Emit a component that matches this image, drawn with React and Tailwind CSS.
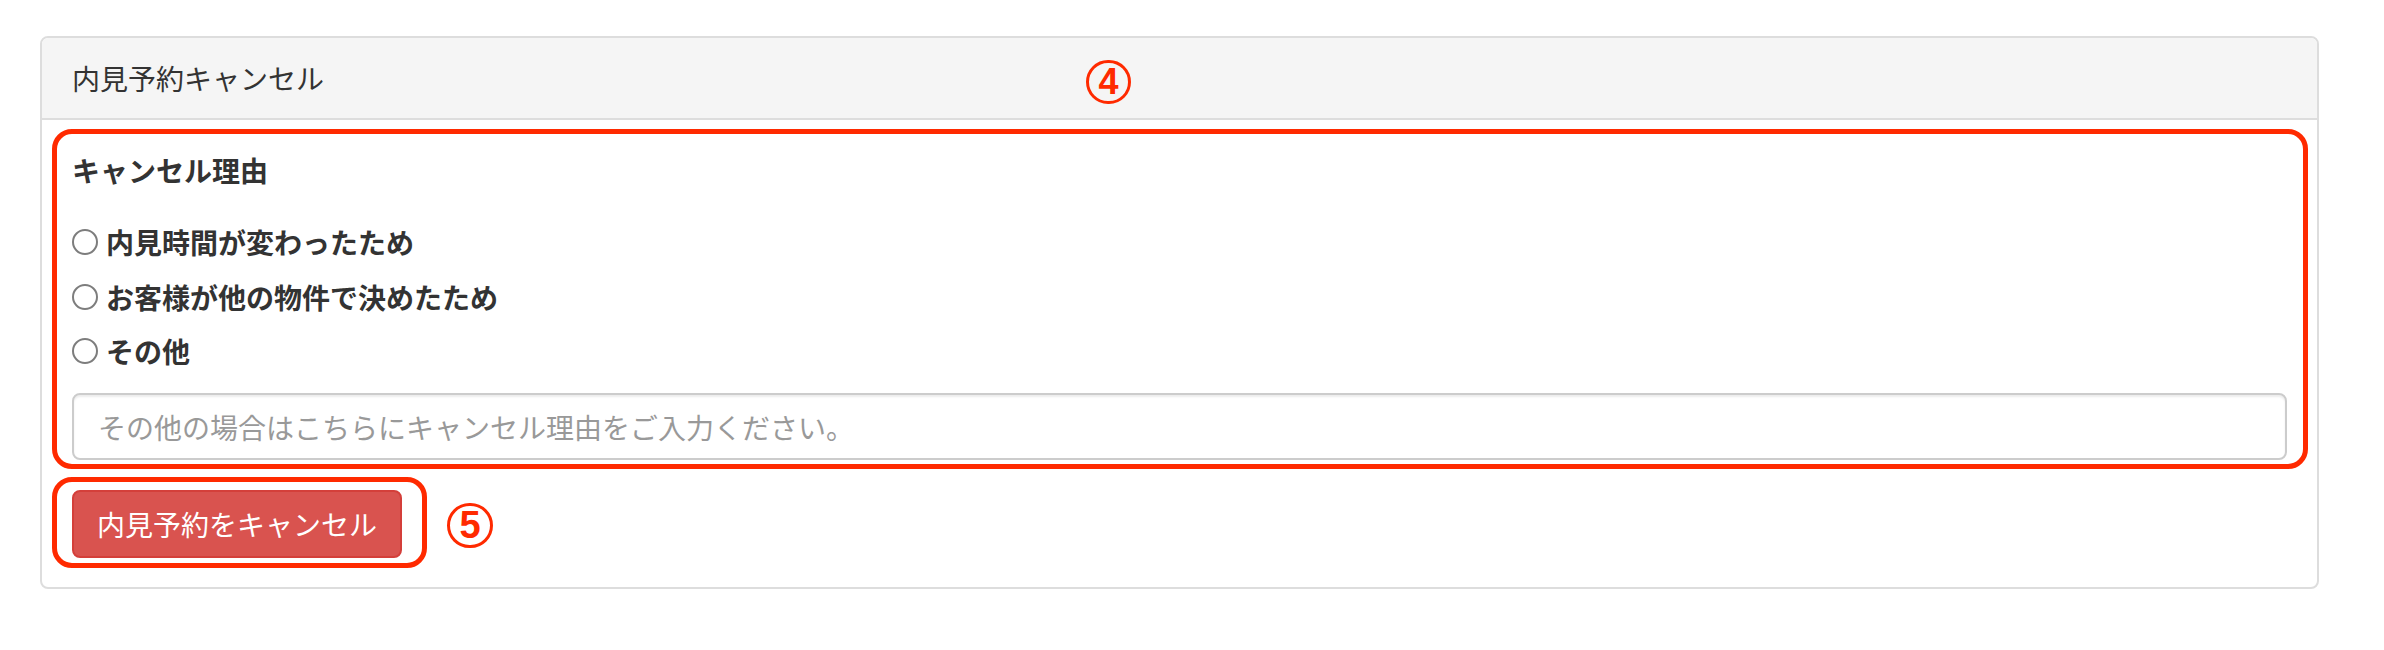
import React from "react";

const font = { fontFamily: '"Noto Sans CJK JP", "Noto Sans", sans-serif' };
const digitFont = { fontFamily: '"Liberation Sans", Arial, sans-serif' };

function Radio({ label }) {
  return (
    <label className="flex items-center h-[54.5px] gap-[8px] text-[28px] font-bold text-[#333] leading-[40px]">
      <span className="w-[26px] h-[26px] rounded-full border-2 border-[#7d7d7d] bg-white shrink-0" />
      <span>{label}</span>
    </label>
  );
}

export default function App() {
  return (
    <div className="relative w-full h-[650px] bg-white pt-[36px] pl-[40px]" style={font}>
      <div className="w-[2279px] border-2 border-[#ddd] rounded-[8px] bg-white">
        <div className="h-[82px] bg-[#f5f5f5] border-b-2 border-[#ddd] rounded-t-[6px] flex items-center pl-[30px] text-[28px] leading-[40px] text-[#333]">
          内見予約キャンセル
        </div>
        <div className="mt-[9px] ml-[10px] mr-[9px] border-[5px] border-[#ff2a00] rounded-[20px] pt-[16px] pb-[4px] pl-[15px] pr-[16px]">
          <div className="text-[28px] font-bold text-[#333] leading-[40px]">キャンセル理由</div>
          <div className="mt-[25px] flex flex-col">
            <Radio label="内見時間が変わったため" />
            <Radio label="お客様が他の物件で決めたため" />
            <Radio label="その他" />
          </div>
          <div className="mt-[14.5px] h-[67px] border-2 border-[#ccc] rounded-[8px] shadow-[inset_0_2px_2px_rgba(0,0,0,0.075)] flex items-center pl-[24px] text-[28px] leading-[40px] text-[#999]">
            その他の場合はこちらにキャンセル理由をご入力ください。
          </div>
        </div>
        <div className="mt-[8px] ml-[10px] mb-[19px] flex items-center gap-[20px]">
          <div className="w-[375px] h-[91px] border-[5px] border-[#ff2a00] rounded-[20px] pl-[15px] pt-[8px]">
            <div className="w-[330px] h-[68px] bg-[#d9534f] border-2 border-[#d43f3a] rounded-[8px] flex items-center justify-center text-white text-[28px] leading-[40px]">
              内見予約をキャンセル
            </div>
          </div>
          <div
            className="mt-[5px] w-[46px] h-[45px] rounded-full border-[3px] border-[#ff2a00] flex items-center justify-center text-[#ff2a00] font-bold text-[38px] leading-none"
            style={digitFont}
          >
            5
          </div>
        </div>
      </div>
      <div
        className="absolute left-[1086px] top-[60px] w-[45px] h-[44px] rounded-full border-[3px] border-[#ff2a00] flex items-center justify-center text-[#ff2a00] font-bold text-[36px] leading-none"
        style={digitFont}
      >
        4
      </div>
    </div>
  );
}
